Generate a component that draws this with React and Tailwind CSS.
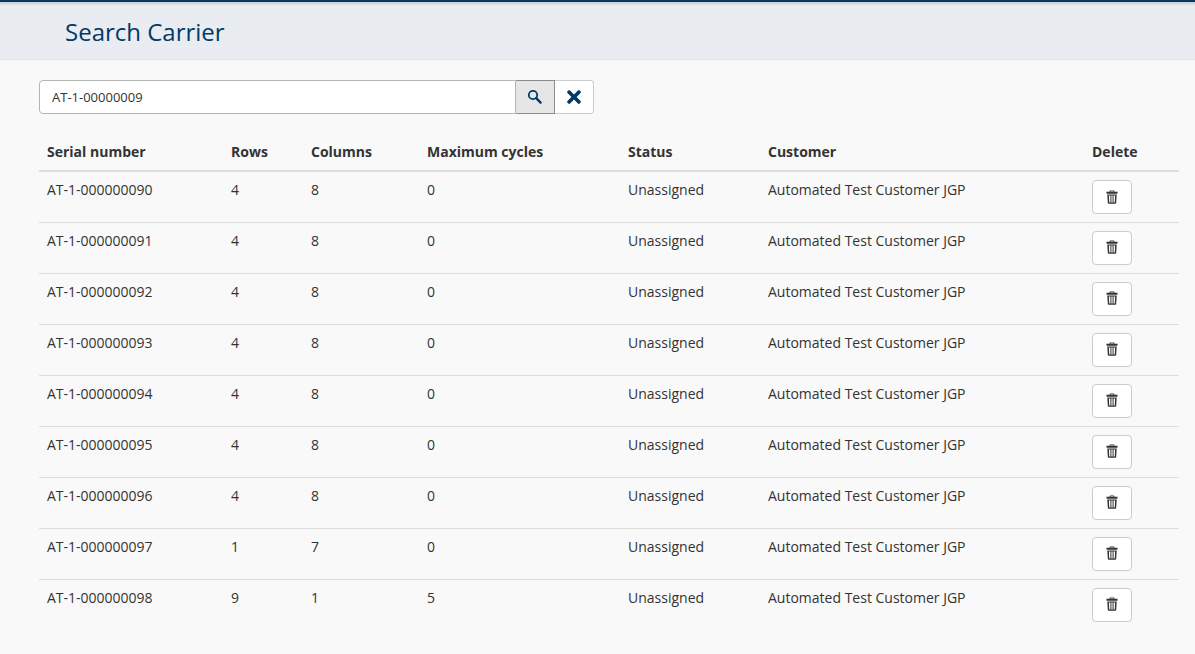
import { FaTimes } from "react-icons/fa";

const carriers = [
  { serial: "AT-1-000000090", rows: 4, columns: 8, cycles: 0 },
  { serial: "AT-1-000000091", rows: 4, columns: 8, cycles: 0 },
  { serial: "AT-1-000000092", rows: 4, columns: 8, cycles: 0 },
  { serial: "AT-1-000000093", rows: 4, columns: 8, cycles: 0 },
  { serial: "AT-1-000000094", rows: 4, columns: 8, cycles: 0 },
  { serial: "AT-1-000000095", rows: 4, columns: 8, cycles: 0 },
  { serial: "AT-1-000000096", rows: 4, columns: 8, cycles: 0 },
  { serial: "AT-1-000000097", rows: 1, columns: 7, cycles: 0 },
  { serial: "AT-1-000000098", rows: 9, columns: 1, cycles: 5 },
];

function SearchIcon() {
  return (
    <svg className="-ml-0.5 -mt-0.5" width="15" height="15" viewBox="0 0 15 15" fill="none" stroke="#003a66">
      <circle cx="6" cy="6" r="4.2" strokeWidth="1.8" />
      <path d="M9.2 9.2 L13.6 13.6" strokeWidth="2.4" strokeLinecap="round" />
    </svg>
  );
}

function TrashIcon() {
  return (
    <svg className="-mt-px" width="12" height="14" viewBox="0 0 12 14" fill="#333">
      <path fillRule="evenodd" d="M4 0.5h4l0.6 1.2H11.5v2H0.5v-2H3.4zM4.6 1.2l-0.3 0.5h3.4l-0.3-0.5z" />
      <path fillRule="evenodd" d="M1.3 4.4h9.4l-0.5 8.4q0 1-1 1H2.8q-1 0-1-1zM2.9 5.6l0.3 7h1.2v-7zM5.4 5.6v7h1.2v-7zM7.6 5.6v7h1.2l0.3-7z" />
    </svg>
  );
}

function App() {
  return (
    <div className="min-h-[654px] bg-[#f9f9f9] font-['Open_Sans',sans-serif] text-sm text-[#333]">
      <div className="h-[60px] border-t-2 border-b border-t-[#003a66] border-b-[#dfe2e7] bg-[#e9ecf1]">
        <div className="h-1 bg-gradient-to-b from-[#c9ccd1] to-[#e9ecf1]" />
        <h1 className="pt-[9px] pl-[65px] text-2xl leading-[33px] text-[#003a66]">Search Carrier</h1>
      </div>

      <div className="px-[39px] pt-5 pr-4">
        <div className="flex h-[34px] w-[555px]">
          <input
            className="h-full w-[477px] rounded-l border border-[#b5b5b5] bg-white px-3 text-[13px] text-[#333] outline-none"
            value="AT-1-00000009"
            readOnly
          />
          <button className="flex h-full w-[39px] items-center justify-center border border-l-0 border-[#8c8c8c] bg-[#e6e6e6]">
            <SearchIcon />
          </button>
          <button className="flex h-full w-[39px] items-center justify-center rounded-r border border-l-0 border-[#ccc] bg-white text-[#003a66]">
            <FaTimes size={20} className="-mt-px" />
          </button>
        </div>

        <table className="mt-5 w-[1140px] table-fixed border-collapse text-left">
          <thead>
            <tr className="h-[37px] border-b-2 border-[#ddd] font-bold">
              <th className="w-[184px] px-2">Serial number</th>
              <th className="w-[80px] px-2">Rows</th>
              <th className="w-[116px] px-2">Columns</th>
              <th className="w-[201px] px-2">Maximum cycles</th>
              <th className="w-[140px] px-2">Status</th>
              <th className="w-[324px] px-2">Customer</th>
              <th className="w-[95px] px-2">Delete</th>
            </tr>
          </thead>
          <tbody>
            {carriers.map((carrier) => (
              <tr key={carrier.serial} className="h-[51px] border-b border-[#ddd] last:border-b-0">
                <td className="px-2 pt-2 align-top">{carrier.serial}</td>
                <td className="px-2 pt-2 align-top">{carrier.rows}</td>
                <td className="px-2 pt-2 align-top">{carrier.columns}</td>
                <td className="px-2 pt-2 align-top">{carrier.cycles}</td>
                <td className="px-2 pt-2 align-top">Unassigned</td>
                <td className="px-2 pt-2 align-top">Automated Test Customer JGP</td>
                <td className="px-2 pt-2 align-top">
                  <button className="flex h-[34px] w-10 items-center justify-center rounded border border-[#ccc] bg-white text-[#333]">
                    <TrashIcon />
                  </button>
                </td>
              </tr>
            ))}
          </tbody>
        </table>
      </div>
    </div>
  );
}

export default App;
